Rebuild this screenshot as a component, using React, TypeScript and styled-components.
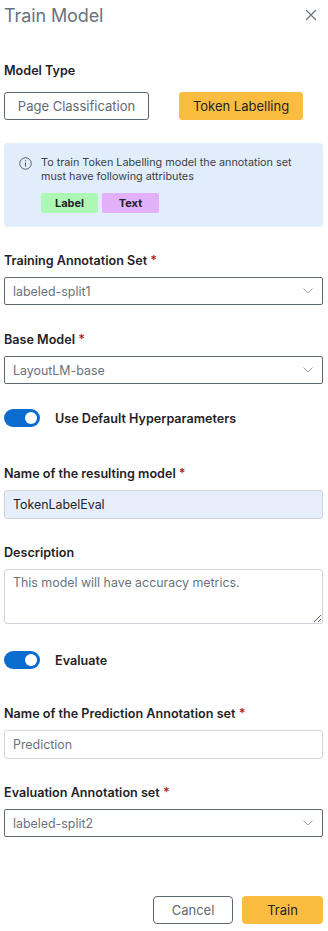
import React, { useState } from "react";
import styled, { createGlobalStyle } from "styled-components";

const GlobalStyle = createGlobalStyle`
  * { box-sizing: border-box; }
  body {
    margin: 0;
    background: #ffffff;
    font-family: Inter, "Noto Sans", "Liberation Sans", sans-serif;
    color: #1f2328;
  }
`;

export default function App() {
  const [useDefaults, setUseDefaults] = useState(true);
  const [evaluate, setEvaluate] = useState(true);

  return (
    <>
      <GlobalStyle />
      <Panel>
        <Header>
          <Title>Train Model</Title>
          <CloseButton aria-label="Close">
            <svg width="12" height="12" viewBox="0 0 12 12">
              <path d="M1 1 L11 11 M11 1 L1 11" stroke="#6b7280" strokeWidth="1.2" />
            </svg>
          </CloseButton>
        </Header>

        <Field $top={33}>
          <Label>Model Type</Label>
          <TypeRow>
            <TypeButton $width={145}>Page Classification</TypeButton>
            <TypeButton $width={124} $active>
              Token Labelling
            </TypeButton>
          </TypeRow>
        </Field>

        <InfoBox>
          <InfoIcon width="13" height="13" viewBox="0 0 14 14">
            <circle cx="7" cy="7" r="6.2" fill="none" stroke="#4b5563" strokeWidth="1" />
            <path d="M7 6 V10.2" stroke="#4b5563" strokeWidth="1.1" />
            <circle cx="7" cy="4.1" r="0.7" fill="#4b5563" />
          </InfoIcon>
          <InfoBody>
            <InfoText>
              To train Token Labelling model the annotation set must have following attributes
            </InfoText>
            <Chips>
              <Chip $bg="#aef8b5">Label</Chip>
              <Chip $bg="#e2b0f8">Text</Chip>
            </Chips>
          </InfoBody>
        </InfoBox>

        <Field $top={26}>
          <Label>
            Training Annotation Set <Req>*</Req>
          </Label>
          <Select value="labeled-split1" />
        </Field>

        <Field $top={27}>
          <Label>
            Base Model <Req>*</Req>
          </Label>
          <Select value="LayoutLM-base" />
        </Field>

        <ToggleRow $top={25}>
          <Switch $on={useDefaults} onClick={() => setUseDefaults(!useDefaults)} />
          <ToggleLabel>Use Default Hyperparameters</ToggleLabel>
        </ToggleRow>

        <Field $top={39}>
          <Label>
            Name of the resulting model <Req>*</Req>
          </Label>
          <TextInput $filled defaultValue="TokenLabelEval" />
        </Field>

        <Field $top={26}>
          <Label>Description</Label>
          <TextArea placeholder="This model will have accuracy metrics." />
        </Field>

        <ToggleRow $top={27}>
          <Switch $on={evaluate} onClick={() => setEvaluate(!evaluate)} />
          <ToggleLabel>Evaluate</ToggleLabel>
        </ToggleRow>

        <Field $top={37}>
          <Label>
            Name of the Prediction Annotation set <Req>*</Req>
          </Label>
          <TextInput placeholder="Prediction" />
        </Field>

        <Field $top={26}>
          <Label>
            Evaluation Annotation set <Req>*</Req>
          </Label>
          <Select value="labeled-split2" />
        </Field>

        <Footer>
          <CancelButton>Cancel</CancelButton>
          <TrainButton>Train</TrainButton>
        </Footer>
      </Panel>
    </>
  );
}

function Select({ value }: { value: string }) {
  return (
    <SelectBox>
      <SelectValue>{value}</SelectValue>
      <svg width="10" height="6" viewBox="0 0 10 6">
        <path d="M0.5 0.5 L5 5 L9.5 0.5" fill="none" stroke="#9ca3af" strokeWidth="1" />
      </svg>
    </SelectBox>
  );
}

const Panel = styled.div`
  width: 328px;
  padding: 0 5px 0 4px;
  display: flex;
  flex-direction: column;
`;

const Header = styled.div`
  height: 30px;
  display: flex;
  align-items: center;
  justify-content: space-between;
`;

const Title = styled.h1`
  margin: 0;
  font-size: 18px;
  font-weight: 400;
  color: #6b7280;
  letter-spacing: -0.1px;
`;

const CloseButton = styled.button`
  background: none;
  border: none;
  padding: 0;
  margin-right: 6px;
  display: flex;
  cursor: pointer;
`;

const Field = styled.div<{ $top: number }>`
  display: flex;
  flex-direction: column;
  gap: 8px;
  margin-top: ${({ $top }) => $top}px;
`;

const Label = styled.label`
  font-size: 12.6px;
  line-height: 16px;
  font-weight: 600;
  color: #1f2328;
`;

const Req = styled.span`
  color: #b42318;
`;

const TypeRow = styled.div`
  display: flex;
  gap: 30px;
  margin-top: 5px;
`;

const TypeButton = styled.button<{ $width: number; $active?: boolean }>`
  width: ${({ $width }) => $width}px;
  height: 28px;
  border-radius: 3px;
  font-family: inherit;
  font-size: 13px;
  border: 1px solid ${({ $active }) => ($active ? "#fbbd3f" : "#5b6270")};
  background: ${({ $active }) => ($active ? "#fbbd3f" : "#ffffff")};
  color: ${({ $active }) => ($active ? "#1f2328" : "#646a76")};
  cursor: pointer;
`;

const InfoBox = styled.div`
  margin-top: 23px;
  height: 84px;
  background: #e1edfb;
  border-radius: 4px;
  padding: 13px 14px 0 15px;
  display: flex;
  gap: 9px;
`;

const InfoIcon = styled.svg`
  flex: none;
  margin-top: 1px;
`;

const InfoBody = styled.div`
  display: flex;
  flex-direction: column;
`;

const InfoText = styled.p`
  margin: 0;
  font-size: 10.8px;
  line-height: 14px;
  color: #3a3f48;
`;

const Chips = styled.div`
  display: flex;
  gap: 4px;
  margin-top: 9px;
`;

const Chip = styled.span<{ $bg: string }>`
  width: 57px;
  height: 20px;
  border-radius: 2px;
  background: ${({ $bg }) => $bg};
  display: flex;
  align-items: center;
  justify-content: center;
  font-size: 11px;
  font-weight: 700;
  color: #1f2328;
`;

const SelectBox = styled.div`
  height: 28px;
  border: 1px solid #5f6674;
  border-radius: 2px;
  padding: 0 9px 0 8px;
  display: flex;
  align-items: center;
  justify-content: space-between;
`;

const SelectValue = styled.span`
  font-size: 12.4px;
  color: #6b7280;
`;

const ToggleRow = styled.div<{ $top: number }>`
  display: flex;
  align-items: center;
  gap: 15px;
  margin-top: ${({ $top }) => $top}px;
`;

const Switch = styled.button<{ $on: boolean }>`
  position: relative;
  width: 36px;
  height: 18px;
  border: none;
  padding: 0;
  border-radius: 9px;
  background: ${({ $on }) => ($on ? "#0b6ccf" : "#c4c8cf")};
  cursor: pointer;

  &::after {
    content: "";
    position: absolute;
    top: 3px;
    left: ${({ $on }) => ($on ? "21px" : "3px")};
    width: 12px;
    height: 12px;
    border-radius: 50%;
    background: #ffffff;
  }
`;

const ToggleLabel = styled.span`
  font-size: 12.6px;
  font-weight: 600;
  color: #1f2328;
`;

const TextInput = styled.input<{ $filled?: boolean }>`
  height: 29px;
  border: 1px solid #d1d5db;
  border-radius: 3px;
  padding: 0 8px;
  font-family: inherit;
  font-size: 12.4px;
  color: #1f2328;
  background: ${({ $filled }) => ($filled ? "#e6eefb" : "#ffffff")};
  outline: none;

  &::placeholder {
    color: #6b7280;
  }
`;

const TextArea = styled.textarea`
  height: 55px;
  border: 1px solid #d1d5db;
  border-radius: 3px;
  padding: 5px 8px;
  font-family: inherit;
  font-size: 12.4px;
  resize: vertical;
  outline: none;

  &::placeholder {
    color: #6b7280;
  }
`;

const Footer = styled.div`
  display: flex;
  justify-content: flex-end;
  gap: 9px;
  margin-top: 59px;
`;

const CancelButton = styled.button`
  width: 80px;
  height: 28px;
  border: 1px solid #5f6674;
  border-radius: 4px;
  background: #ffffff;
  font-family: inherit;
  font-size: 13px;
  color: #646a76;
  cursor: pointer;
`;

const TrainButton = styled.button`
  width: 81px;
  height: 28px;
  border: none;
  border-radius: 4px;
  background: #fbbd3f;
  font-family: inherit;
  font-size: 13px;
  color: #1f2328;
  cursor: pointer;
`;
